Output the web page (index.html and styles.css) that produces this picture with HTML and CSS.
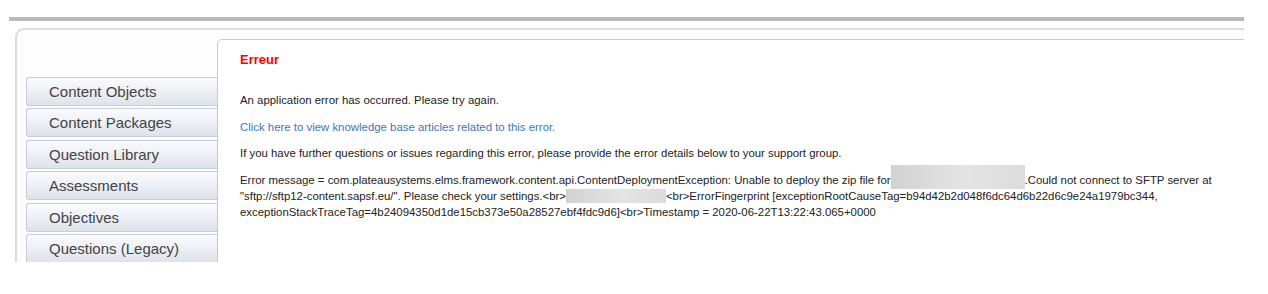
FILE: index.html
```html
<!DOCTYPE html>
<html lang="en">
<head>
    <meta charset="UTF-8">
    <title>Erreur</title>
    <link rel="stylesheet" href="styles.css">
</head>
<body>
    <div class="viewport">
        <div class="top-bar"></div>

        <div class="shell">
            <ul class="side-nav">
                <li><a href="#">Content Objects</a></li>
                <li><a href="#">Content Packages</a></li>
                <li><a href="#">Question Library</a></li>
                <li><a href="#">Assessments</a></li>
                <li><a href="#">Objectives</a></li>
                <li><a href="#">Questions (Legacy)</a></li>
            </ul>

            <div class="content-panel">
                <h2 class="error-title">Erreur</h2>
                <p>An application error has occurred. Please try again.</p>
                <p><a class="kb-link" href="#">Click here to view knowledge base articles related to this error.</a></p>
                <p>If you have further questions or issues regarding this error, please provide the error details below to your support group.</p>
                <p class="error-details">Error message = com.plateausystems.elms.framework.content.api.ContentDeploymentException: Unable to deploy the zip file for<span class="redacted redacted-file"></span>.Could not connect to SFTP server at "sftp://sftp12-content.sapsf.eu/". Please check your settings.&lt;br&gt;<span class="redacted redacted-id"></span>&lt;br&gt;ErrorFingerprint [exceptionRootCauseTag=b94d42b2d048f6dc64d6b22d6c9e24a1979bc344, exceptionStackTraceTag=4b24094350d1de15cb373e50a28527ebf4fdc9d6]&lt;br&gt;Timestamp = 2020-06-22T13:22:43.065+0000</p>
            </div>
        </div>
    </div>
</body>
</html>
```

FILE: styles.css
```css
:root {
    --text-primary: #222;
    --nav-text: #444;
    --link-color: #3d74c2;
    --error-red: #f00;
    --panel-border: #c9c9c9;
    --shell-border: #dcdcdc;
    --button-border: #c5cdd9;
}

* {
    margin: 0;
    padding: 0;
    box-sizing: border-box;
}

body {
    font-family: "Liberation Sans", Arial, sans-serif;
    color: var(--text-primary);
    background-color: #fff;
}

.viewport {
    width: 1244px;
    height: 262px;
    overflow: hidden;
    padding-top: 17px;
}

.top-bar {
    height: 4px;
    margin-left: 9px;
    background-color: #bababa;
}

.shell {
    display: flex;
    align-items: flex-start;
    width: 1300px;
    height: 400px;
    margin-top: 7px;
    margin-left: 15px;
    padding: 9px 0 0 9px;
    background-color: #fdfdfd;
    border: 2px solid var(--shell-border);
    border-radius: 9px;
}

/* left navigation */
.side-nav {
    list-style: none;
    width: 192px;
    flex-shrink: 0;
    margin-top: 38px;
}

.side-nav li {
    margin-bottom: 2.4px;
}

.side-nav a {
    display: block;
    height: 29px;
    padding-left: 22px;
    line-height: 27px;
    font-size: 15px;
    color: var(--nav-text);
    text-decoration: none;
    background: linear-gradient(to bottom, #fafbfd 0%, #eef1f6 45%, #dde3ec 100%);
    border: 1px solid var(--button-border);
    border-right: none;
    border-radius: 3px 0 0 3px;
}

/* main content */
.content-panel {
    flex: 1;
    margin-left: -1px;
    height: 400px;
    padding: 12px 0 0 22px;
    background-color: #fff;
    border: 1px solid var(--panel-border);
    border-radius: 5px 0 0 0;
    font-size: 11.4px;
    line-height: 16px;
}

.error-title {
    font-size: 13px;
    line-height: 16px;
    font-weight: bold;
    color: var(--error-red);
    margin-bottom: 24px;
}

.content-panel p {
    max-width: 990px;
    margin-bottom: 10.5px;
}

.kb-link {
    color: var(--link-color);
    text-decoration: none;
}

.redacted {
    display: inline-block;
    vertical-align: bottom;
    background: linear-gradient(to right, #d2d2d2 0%, #e4e4e4 55%, #dcdcdc 100%);
}

.redacted-file {
    width: 134px;
    height: 24px;
    margin-top: -8px;
    margin-bottom: -1px;
}

.redacted-id {
    width: 100px;
    height: 14px;
    margin-bottom: 1px;
}
```
